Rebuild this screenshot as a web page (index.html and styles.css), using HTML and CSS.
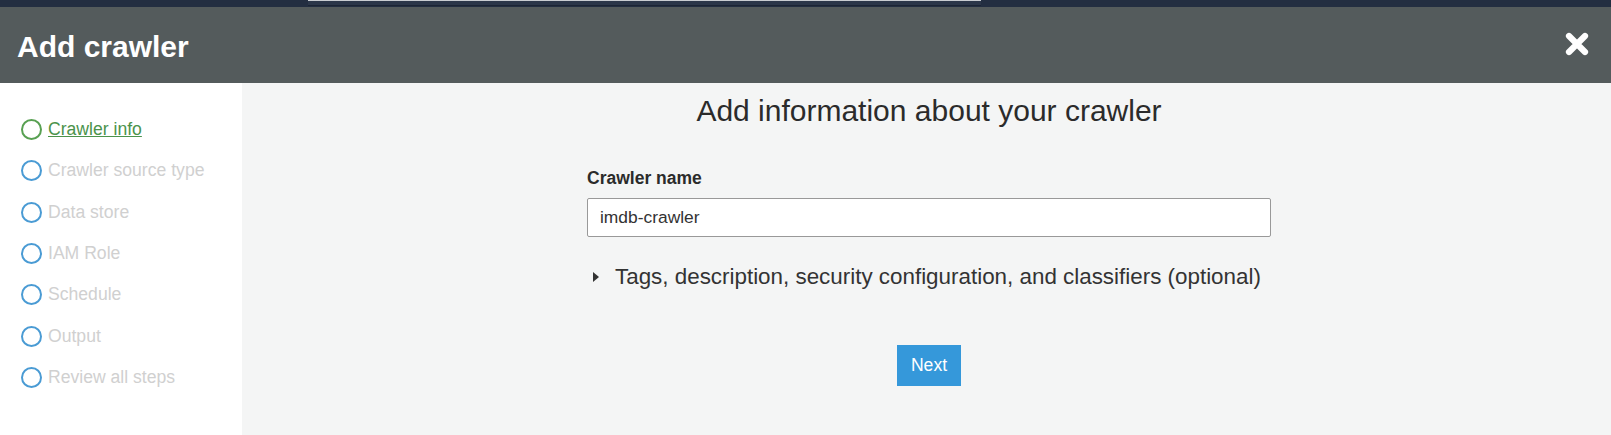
FILE: index.html
```html
<!DOCTYPE html>
<html lang="en">
<head>
<meta charset="utf-8">
<title>Add crawler</title>
<link rel="stylesheet" href="styles.css">
</head>
<body>
<div class="topbar"><div class="topbar-field"></div></div>
<header class="modal-header">
  <h1 class="modal-title">Add crawler</h1>
  <button class="close-btn" aria-label="Close">
    <svg width="24" height="24" viewBox="0 0 24 24"><path d="M4 4 L20 20 M20 4 L4 20" stroke="#fff" stroke-width="6.2" stroke-linecap="round" fill="none"/></svg>
  </button>
</header>
<div class="modal-body">
  <nav class="steps">
    <div class="step step-active"><span class="step-circle"></span><a class="step-label" href="#">Crawler info</a></div>
    <div class="step"><span class="step-circle"></span><span class="step-label">Crawler source type</span></div>
    <div class="step"><span class="step-circle"></span><span class="step-label">Data store</span></div>
    <div class="step"><span class="step-circle"></span><span class="step-label">IAM Role</span></div>
    <div class="step"><span class="step-circle"></span><span class="step-label">Schedule</span></div>
    <div class="step"><span class="step-circle"></span><span class="step-label">Output</span></div>
    <div class="step"><span class="step-circle"></span><span class="step-label">Review all steps</span></div>
  </nav>
  <main class="content">
    <h2 class="content-title">Add information about your crawler</h2>
    <div class="form">
      <label class="field-label" for="name">Crawler name</label>
      <input class="field-input" id="name" type="text" value="imdb-crawler">
      <div class="expander"><span class="caret"></span><span>Tags, description, security configuration, and classifiers (optional)</span></div>
      <div class="actions"><button class="next-btn">Next</button></div>
    </div>
  </main>
</div>
</body>
</html>
```
FILE: styles.css
```css
* { box-sizing: border-box; }
html, body { margin: 0; padding: 0; }
body {
  width: 1611px;
  height: 435px;
  overflow: hidden;
  font-family: "Liberation Sans", Arial, sans-serif;
  color: #333;
  background: #f4f5f5;
}
.topbar {
  height: 7px;
  background: #232e41;
  padding-left: 308px;
}
.topbar-field {
  width: 673px;
  height: 6px;
  background: #2b3649;
  border-top: 1px solid #c9cdd2;
  border-bottom: 1px solid #1c2535;
}
.modal-header {
  height: 76px;
  background: #545b5c;
  display: flex;
  align-items: flex-start;
  justify-content: space-between;
  padding: 0 22px 0 17px;
}
.modal-title {
  margin: 21.5px 0 0;
  font-size: 30px;
  line-height: 36px;
  font-weight: bold;
  color: #fff;
}
.close-btn {
  margin-top: 24.5px;
  padding: 0;
  border: 0;
  background: none;
  width: 24px;
  height: 24px;
  display: block;
}
.close-btn svg { display: block; }
.modal-body {
  display: flex;
  height: 352px;
}
.steps {
  width: 242px;
  background: #fff;
  padding: 26px 0 0 20.5px;
}
.step {
  height: 41.3px;
  display: flex;
  align-items: center;
  gap: 6.5px;
  font-size: 17.6px;
}
.step-circle {
  width: 21px;
  height: 21px;
  border: 2px solid #4a9bd4;
  border-radius: 50%;
  flex: none;
}
.step-label { color: #d0d0d0; }
.step-active .step-circle { border-color: #58a052; }
.step-active .step-label { color: #4b934b; text-decoration: underline; }
.content {
  flex: 1;
  padding: 10.3px 0 0 5px;
  display: flex;
  flex-direction: column;
  align-items: center;
}
.content-title {
  margin: 0;
  font-size: 30px;
  line-height: 36px;
  font-weight: normal;
  color: #2b2b2b;
}
.form {
  width: 684px;
  margin-top: 38px;
  display: flex;
  flex-direction: column;
}
.field-label {
  font-size: 17.5px;
  line-height: 22px;
  font-weight: bold;
  color: #2b2b2b;
}
.field-input {
  margin-top: 9px;
  height: 39px;
  width: 684px;
  border: 1px solid #999;
  border-radius: 2px;
  background: #fff;
  padding: 0 12px;
  font-family: "Liberation Sans", Arial, sans-serif;
  font-size: 17.4px;
  color: #333;
}
.expander {
  margin-top: 26px;
  display: flex;
  align-items: center;
  padding-left: 6px;
  font-size: 22.4px;
  line-height: 28px;
  color: #333;
}
.caret {
  width: 0;
  height: 0;
  border-left: 6px solid #333;
  border-top: 5px solid transparent;
  border-bottom: 5px solid transparent;
  margin-right: 16px;
  margin-top: -1px;
}
.actions {
  margin-top: 53.6px;
  display: flex;
  justify-content: center;
}
.next-btn {
  width: 64px;
  height: 41px;
  border: 0;
  background: #3598da;
  color: #fff;
  font-family: "Liberation Sans", Arial, sans-serif;
  font-size: 17.6px;
  padding: 0;
}
```
